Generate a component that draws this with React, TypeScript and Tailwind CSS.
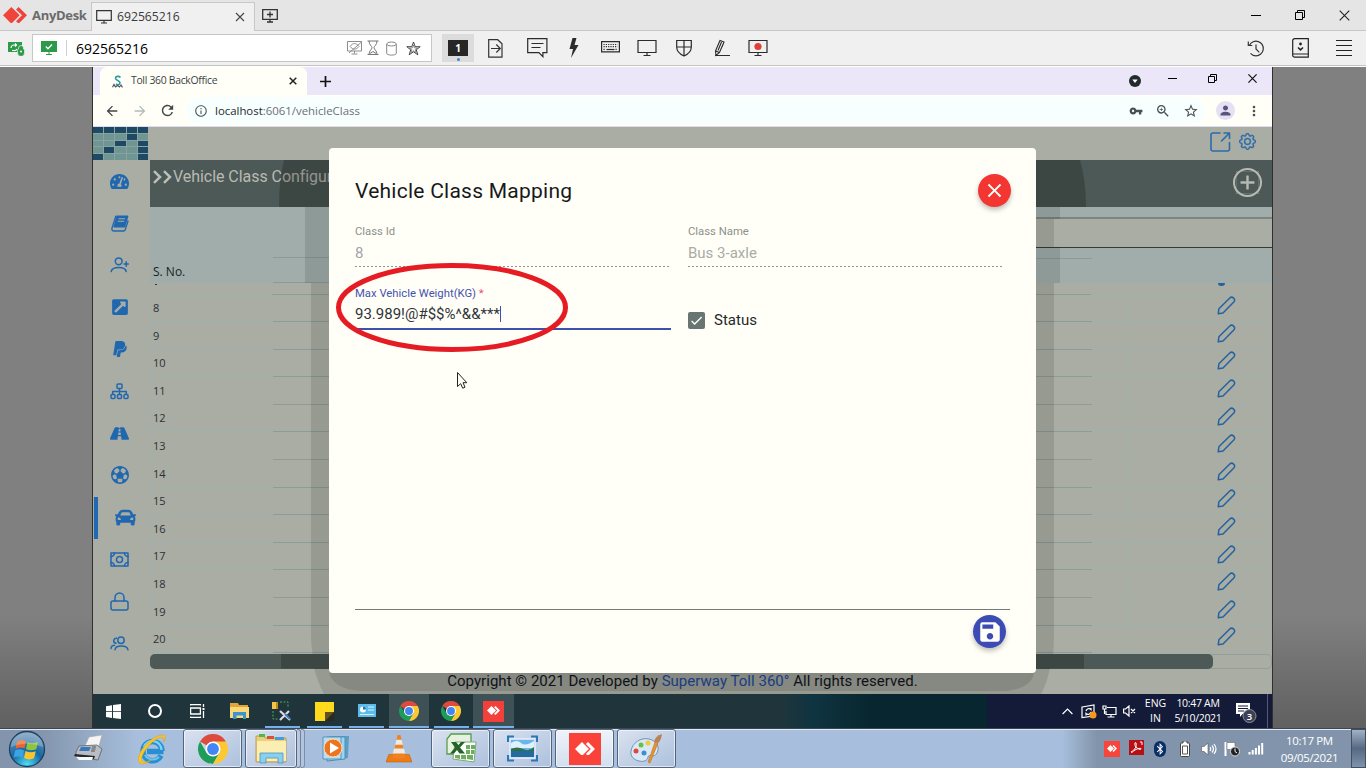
import type { ReactNode } from "react";
import {
  MdArrowBack, MdArrowForward, MdRefresh, MdInfoOutline, MdVpnKey, MdZoomIn, MdStarBorder,
  MdPerson, MdMoreVert, MdClose, MdAdd, MdSave, MdCheck,
} from "react-icons/md";
import { FaTachometerAlt, FaExternalLinkSquareAlt, FaPaypal, FaRoad, FaCar, FaBluetoothB } from "react-icons/fa";
import { IoMdFootball } from "react-icons/io";
import { BsGear } from "react-icons/bs";

const Slot = ({ className = "", children }: { className?: string; children?: ReactNode }) => (
  <div className={`flex h-full shrink-0 items-center justify-center ${className}`}>{children}</div>
);

/* ---------- AnyDesk ---------- */

const AnyDeskMark = ({ size, color }: { size: number; color: string }) => (
  <svg width={size} height={(size * 16) / 23} viewBox="0 0 23 16" fill={color}>
    <path d="M8 0l8 8-8 8-8-8z" />
    <path d="M12.5 2.3L15 0l8 8-8 8-2.500-2.3L18.200 8z" />
  </svg>
);

const Monitor = ({ children, w = 20 }: { children?: ReactNode; w?: number }) => (
  <svg width={w} height="18" viewBox="0 0 20 18" fill="none" stroke="#2b2b2b" strokeWidth="1.200">
    <path d="M1 1.500h18v12H1zM10 13.500v3M6.500 16.500h7" />
    {children}
  </svg>
);

const WinMin = () => <div className="h-px w-[10px] bg-black" />;
const WinRestore = () => (
  <svg width="10" height="10" viewBox="0 0 10 10" fill="none" stroke="#000">
    <path d="M.5 2.500h7v7h-7zM2.500 2.500v-2h7v7h-2" />
  </svg>
);
const WinClose = () => (
  <svg width="11" height="11" viewBox="0 0 11 11" fill="none" stroke="#222" strokeWidth="1.100">
    <path d="M.7.700l9.600 9.600M10.300.700L.7 10.300" />
  </svg>
);

const AnyDeskTitle = () => (
  <div className="flex h-[31px] shrink-0 border-b border-[#c8c8c8] bg-[#e5e5e5]">
    <div className="flex w-[91px] items-center pl-[3px]">
      <AnyDeskMark size={24} color="#ef443b" />
      <span className="ml-[5px] pt-[2px] text-[13px] font-bold tracking-[-0.300px] text-[#6b6b6b]">AnyDesk</span>
    </div>
    <div className="mt-[2px] -mb-px flex w-[164px] items-center border border-b-0 border-[#c8c8c8] bg-[#f0f0f0] pl-[4px]">
      <svg width="16" height="14" viewBox="0 0 16 14" fill="none" stroke="#333" strokeWidth="1.200">
        <path d="M.7.700h14.600v9.600H.7zM8 10.300v2.500M5 13h6" />
      </svg>
      <span className="ml-[5px] text-[12.200px] text-[#3a3a3a]">692565216</span>
      <span className="ml-auto mr-[9px]"><svg width="10" height="10" viewBox="0 0 10 10" stroke="#444" strokeWidth="1.100"><path d="M1 1l8 8M9 1L1 9" /></svg></span>
    </div>
    <Slot className="w-[29px] pt-[2px]">
      <svg width="16" height="14" viewBox="0 0 16 14" fill="none" stroke="#333" strokeWidth="1.300">
        <path d="M.7.700h14.600v9.600H.7zM8 10.300v2.500M5 13h6M8 2.500v6M5 5.500h6" />
      </svg>
    </Slot>
    <div className="ml-auto flex">
      <Slot className="w-[44px]"><WinMin /></Slot>
      <Slot className="w-[44px]"><WinRestore /></Slot>
      <Slot className="w-[44px]"><WinClose /></Slot>
    </div>
  </div>
);

const AnyDeskToolbar = () => (
  <div className="flex h-[36px] shrink-0 items-center border-b border-white bg-[#f0f0f0]">
    <div className="flex h-[35px] w-full items-center border-b border-[#c4c4c4]">
      <Slot className="w-[32px]">
        <svg width="17" height="15" viewBox="0 0 17 15">
          <path d="M0 1h14v10H0z" fill="#2c9a48" />
          <path d="M3 7a3 3 0 013-3h2M7 2.500L8.500 4 7 5.500M9 8a3 3 0 01-3 1.500H4" stroke="#fff" fill="none" strokeWidth="1.200" />
          <path d="M3 13h6M9.500 9.500a1.500 1.500 0 011-1.500V7a2.500 2.500 0 015 0v1a1.500 1.500 0 011 1.500V12a3 3 0 01-7 0z" fill="#2c9a48" stroke="#f0f0f0" strokeWidth=".7" />
          <circle cx="13" cy="10.500" r="1" fill="#fff" />
        </svg>
      </Slot>
      <div className="flex h-[28px] w-[400px] items-center border border-[#c6c6c6] bg-white pl-[8px]">
        <svg width="16" height="14" viewBox="0 0 16 14">
          <path d="M0 0h16v11H0zM5 13h6v1H5zM7.500 11h1v2h-1z" fill="#2c9a48" />
          <path d="M4.800 5.500l2.200 2.200 4-4.200" fill="none" stroke="#fff" strokeWidth="1.300" />
        </svg>
        <div className="ml-[9px] h-[16px] w-px bg-[#d0d0d0]" />
        <span className="ml-[9px] text-[14px] text-black">692565216</span>
        <div className="ml-auto flex items-center pr-[10px]">
          <svg width="16" height="14" viewBox="0 0 16 14" fill="none" stroke="#8c8c8c">
            <path d="M.5.500h14v9.500H.5zM7.500 10v2.500M4.500 13h6M2 12L14.500 1M3 5.500c3-4 6-4 9 0-3 3.500-6 3.500-9 0" />
          </svg>
          <svg className="ml-[4px]" width="12" height="16" viewBox="0 0 12 16" fill="none" stroke="#777">
            <path d="M.5 1h11M.5 14.500h11M2 1c0 4 3 5 3 6.700S2 10.500 2 14.500M10 1c0 4-3 5-3 6.700s3 2.800 3 6.800M3 13.500l3-2 3 2" />
          </svg>
          <svg className="ml-[7px]" width="11" height="15" viewBox="0 0 11 15" fill="none" stroke="#888">
            <ellipse cx="5.500" cy="3" rx="4.800" ry="2" /><path d="M.7 3v9.300c0 2.400 9.600 2.400 9.600 0V3" />
          </svg>
          <svg className="ml-[9px]" width="15" height="15" viewBox="0 0 15 15" fill="none" stroke="#333" strokeWidth=".9">
            <path d="M7.500 1l1.700 4.700h5L10.300 8.800l1.500 5-4.300-3-4.300 3 1.500-5L.8 5.700h5z" />
            <path d="M7.500 4l1 2.900h3L9.200 8.500l.9 3-2.600-1.800-2.600 1.800.9-3L3.500 6.900h3z" strokeWidth=".5" />
          </svg>
        </div>
      </div>
      <div className="ml-[10px] flex h-[28px] w-[32px] flex-col items-center bg-[#dcdcdc] pt-[6px]">
        <div className="flex h-[16px] w-[20px] items-center justify-center bg-[#262626] text-[10px] font-bold text-white">1</div>
        <div className="mt-[2px] size-[3px] rounded-full bg-[#3b82d0]" />
      </div>
      <Slot className="w-[42px]">
        <svg width="15" height="19" viewBox="0 0 15 19" fill="none" stroke="#333" strokeWidth="1.200">
          <path d="M.7.700h9l4.300 4v13.400H.7zM3 9.500h9M8.300 5.500l4 4-4 4" />
        </svg>
      </Slot>
      <Slot className="w-[42px]">
        <svg width="21" height="20" viewBox="0 0 21 20" fill="none" stroke="#2b2b2b" strokeWidth="1.200">
          <path d="M.7.700h19.200v14h-4v4l-4-4H.7zM4.500 5.500h12M4.500 9.500h9" />
        </svg>
      </Slot>
      <Slot className="w-[32px]">
        <svg width="10" height="20" viewBox="0 0 10 20" fill="#2b2b2b"><path d="M3.500 0h4L5.500 7H9.500L2 20l2-9H.5z" /></svg>
      </Slot>
      <Slot className="w-[41px]">
        <svg className="-mt-[3px]" width="19" height="12" viewBox="0 0 19 12" fill="none" stroke="#2b2b2b" strokeWidth="1.200">
          <path d="M.6.600h17.800v10.300H.6z" />
          <path d="M2.500 3.500h14M2.500 5.700h14M2.500 8.300h2M14.500 8.300h2" strokeDasharray="1.200 1.100" /><path d="M5.500 8.500h8" />
        </svg>
      </Slot>
      <Slot className="w-[32px]"><Monitor /></Slot>
      <Slot className="w-[42px]">
        <svg width="16" height="18" viewBox="0 0 16 18" fill="none" stroke="#2b2b2b" strokeWidth="1.200">
          <path d="M.7 1.500h14.600V8c0 5-4 7.500-7.300 9-3.300-1.500-7.300-4-7.300-9zM8 1.500V17M.7 8h14.600" />
        </svg>
      </Slot>
      <Slot className="w-[34px]">
        <svg width="16" height="18" viewBox="0 0 16 18" fill="none" stroke="#2b2b2b" strokeWidth="1.100">
          <path d="M1 16.500h15M1.500 12L6 1.500l4 1.500-4.500 10.500-3.500 3zM1.500 12l4 1.500M7.500 3L4 11.500M8 8l2-5" />
        </svg>
      </Slot>
      <Slot className="w-[38px]"><Monitor><circle cx="10" cy="7.500" r="3.600" fill="#e0403a" stroke="none" /></Monitor></Slot>
      <div className="ml-auto flex h-full">
        <Slot className="w-[44px]">
          <svg width="18" height="17" viewBox="0 0 18 17" fill="none" stroke="#333" strokeWidth="1.200">
            <path d="M2.500 5.200A7.300 7.300 0 119 15.800a7.300 7.300 0 01-5.500-2.500M1.300 1.500v4h4M9 4.500V9l3.300 3.300" />
          </svg>
        </Slot>
        <Slot className="w-[44px]">
          <svg width="17" height="20" viewBox="0 0 17 20" fill="none" stroke="#222" strokeWidth="1.200">
            <path d="M.7 2.700a2 2 0 012-2h13.600v18.500H2.700a2 2 0 01-2-2zM.7 16h15.600" />
            <path d="M6 9.500l2.500 2.300L11 9.500" strokeWidth="1.600" /><circle cx="8.500" cy="6" r="1.400" fill="#222" stroke="none" />
          </svg>
        </Slot>
        <Slot className="w-[44px]">
          <div className="flex flex-col gap-[4px]">
            {[0, 1, 2, 3].map((i) => <div key={i} className="h-px w-[16px] bg-[#222]" />)}
          </div>
        </Slot>
      </div>
    </div>
  </div>
);

/* ---------- Browser ---------- */

const BrowserTabs = () => (
  <div className="flex h-[28px] shrink-0 bg-[#ece7f8] pl-[7px]">
    <div className="flex w-[207px] items-center rounded-t-[7px] bg-[#fffff8] pl-[12px]">
      <svg width="11" height="13" viewBox="0 0 11 13" fill="none">
        <path d="M8.500 2.500C7 .700 3.500 1 3.500 3.300S8 5.500 8 7.800 5.500 10 4 9" stroke="#2b9c9c" strokeWidth="1.600" />
        <path d="M.5 12.300L2 9.500l1.500 2.300 2-1.300 2 1.500 1.500-2 1.500 2.300" stroke="#556" strokeWidth="1.200" />
      </svg>
      <span className="ml-[8px] whitespace-nowrap text-[10.400px] tracking-[-0.300px] text-[#3a3f44]">Toll 360 BackOffice</span>
      <svg className="ml-auto mr-[10px]" width="8" height="8" viewBox="0 0 8 8" stroke="#222" strokeWidth="1.500"><path d="M.7.700l6.600 6.600M7.300.700L.7 7.300" /></svg>
    </div>
    <Slot className="w-[37px]">
      <svg width="11" height="11" viewBox="0 0 11 11" stroke="#111" strokeWidth="1.700"><path d="M5.500 0v11M0 5.500h11" /></svg>
    </Slot>
    <div className="ml-auto flex">
      <Slot className="w-[37px]">
        <svg width="12" height="12" viewBox="0 0 12 12"><circle cx="6" cy="6" r="6" fill="#222b2b" /><path d="M3.300 4.500h5.400L6 8z" fill="#fff" /></svg>
      </Slot>
      <Slot className="w-[39px] pb-[5px]"><div className="h-px w-[9px] bg-black" /></Slot>
      <Slot className="w-[40px] pb-[5px]">
        <svg width="9" height="9" viewBox="0 0 9 9" fill="none" stroke="#000"><path d="M.5 2.500h6v6h-6zM2.500 2.500v-2h6v6h-2" /></svg>
      </Slot>
      <Slot className="w-[40px] pb-[5px]">
        <svg width="9" height="9" viewBox="0 0 9 9" stroke="#111" strokeWidth="1.200"><path d="M.4.400l8.200 8.200M8.600.400L.4 8.600" /></svg>
      </Slot>
    </div>
  </div>
);

const AddressBar = () => (
  <div className="flex h-[32px] shrink-0 items-center border-b border-[#dcdcee] bg-[#fffff8] pl-[5px]">
    <Slot className="w-[28px]"><MdArrowBack size={16} color="#3f4648" /></Slot>
    <Slot className="w-[27px]"><MdArrowForward size={16} color="#b3bab9" /></Slot>
    <Slot className="w-[28px]"><MdRefresh size={17} color="#3f4648" /></Slot>
    <div className="ml-[5px] flex h-[27px] flex-1 items-center rounded-full bg-[#f8ffff] pl-[8px]">
      <MdInfoOutline size={14} color="#555b60" />
      <span className="ml-[7px] whitespace-nowrap pt-px text-[11.400px] text-[#6a7075]"><span className="text-[#222a2c]">localhost</span>:6061/vehicleClass</span>
      <div className="ml-auto flex h-full">
        <Slot className="w-[27px]"><MdVpnKey size={14} color="#4a5052" /></Slot>
        <Slot className="w-[28px]"><MdZoomIn size={16} color="#4a5052" /></Slot>
        <Slot className="w-[28px]"><MdStarBorder size={16} color="#4a5052" /></Slot>
      </div>
    </div>
    <Slot className="ml-[6px] w-[28px]">
      <div className="flex size-[19px] items-center justify-center rounded-full bg-[#e6e0f5]"><MdPerson size={15} color="#55567a" /></div>
    </Slot>
    <Slot className="mr-[4px] w-[29px]"><MdMoreVert size={16} color="#4a5052" /></Slot>
  </div>
);

/* ---------- Web application ---------- */

const logoDark = [
  [1, 1, 1, 1, 1],
  [0, 0, 0, 1, 0],
  [0, 0, 1, 0, 1],
  [0, 1, 0, 0, 1],
  [1, 0, 0, 0, 1],
];

const Line = ({ children, w = 20, h = 20 }: { children: ReactNode; w?: number; h?: number }) => (
  <svg width={w} height={h} viewBox={`0 0 ${w} ${h}`} fill="none" stroke="#2067b0" strokeWidth="1.500" strokeLinecap="round" strokeLinejoin="round">{children}</svg>
);

const sideIcons: ReactNode[] = [
  <FaTachometerAlt size={19} />,
  <svg width="18" height="17" viewBox="0 0 18 17">
    <path d="M5.500.500H16.300a1 1 0 011 1.300l-3.200 10.700H2.300z" fill="#2067b0" />
    <path d="M5 .800L1 13c-.5 2 .5 3 2 3h9.500c1 0 1.500-.5 1.800-1.500l2.900-9" fill="none" stroke="#2067b0" strokeWidth="1.300" />
    <path d="M7.500 3.800h6.500M6.700 6.300h6.500M3 13.800h9.500" stroke="#a9ada3" strokeWidth="1" />
  </svg>,
  <Line w={20} h={16}><circle cx="8.700" cy="4.300" r="3.400" /><path d="M1.200 14.500c1-5.300 14-5.300 15 0M16.200 4.800v4.400M14 7h4.400" /></Line>,
  <FaExternalLinkSquareAlt size={18} />,
  <FaPaypal size={18} />,
  <Line w={19} h={17}><rect x="7" y="1" width="5" height="4.500" rx="1" /><path d="M9.500 5.500v5M2.700 11V8.500h13.600V11" /><rect x="1" y="11.500" width="4" height="4" rx="1" /><rect x="7.500" y="11.500" width="4" height="4" rx="1" /><rect x="14" y="11.500" width="4" height="4" rx="1" /></Line>,
  <FaRoad size={19} />,
  <IoMdFootball size={22} />,
  <FaCar size={21} />,
  <Line w={19} h={15}><path d="M1 1h17v13H1z" /><circle cx="9.500" cy="7.500" r="3" /><path d="M1 4.500A3.500 3.500 0 004.500 1M18 4.500A3.500 3.500 0 0114.500 1M1 10.500A3.500 3.500 0 014.500 14M18 10.500a3.500 3.500 0 00-3.500 3.500" /></Line>,
  <Line w={19} h={19}><rect x="1" y="9" width="17" height="9" rx="2" /><path d="M5 9V5.500a4.500 4.500 0 019 0V9" /></Line>,
  <Line w={19} h={15}><circle cx="11" cy="4.300" r="3.200" /><path d="M5 13.800c.5-5 12-5 13 0M6.500 2.300a2.400 2.400 0 10-.5 5M1 12.500c0-2 1.500-3 3.500-3.200" /></Line>,
];

const Sidebar = () => (
  <div className="flex w-[57px] shrink-0 flex-col">
    <div className="grid h-[33px] w-[55px] grid-cols-5 grid-rows-5 gap-px bg-[#8ba3a0]">
      {logoDark.flat().map((d, i) => <div key={i} className={d ? "bg-[#1d4964]" : "bg-[#6f9693]"} />)}
    </div>
    <div className="mt-px flex flex-col text-[#2067b0]">
      {sideIcons.map((icon, i) => (
        <div key={i} className={`flex h-[42px] items-center justify-center pb-[1.500px] ${i === 8 ? "ml-px w-[56px] border-l-[4px] border-[#1f68b3] pl-[2px]" : "w-[57px] pr-[4px]"}`}>{icon}</div>
      ))}
    </div>
  </div>
);

const Pencil = () => (
  <svg width="19" height="19" viewBox="0 0 19 19" fill="none" stroke="#2563a0" strokeWidth="1.500" strokeLinejoin="round">
    <path d="M1.200 17.800l.7-5L12.800 2c2.400-2.300 6.400 1.200 4 3.900L6 17z" />
  </svg>
);

const rows = [8, 9, 10, 11, 12, 13, 14, 15, 16, 17, 18, 19, 20];

const Segments = () => (
  <div className="flex h-px bg-[#a0b0ac]">
    <div className="ml-[122px] w-[819px] bg-[#8b9c9a]" />
  </div>
);

const Table = () => (
  <div className="flex flex-col">
    <div className="flex h-[76px] bg-[#a0adab]">
      <div className="flex flex-1 flex-col">
        <div className="ml-[123px] mt-[50px] h-px bg-[#8c9a98]" />
        <div className="ml-[3px] mt-[6px] text-[12px] font-medium leading-[16px] text-[#1b1f22]">S. No.</div>
        <div className="ml-[123px] mt-[2px] h-px bg-[#8c9a98]" />
      </div>
      <div className="flex w-[336px] flex-col">
        <div className="h-[11px] border-b border-[#7b8683]" />
        <div className="h-[30px] border-b border-[#343c3a] border-t border-t-[#7b8683] bg-[#a9ada3]" />
        <div className="mt-[10px] h-px w-[156px] bg-[#8c9a98]" />
      </div>
    </div>
    <div className="flex h-[11.500px] flex-col justify-between overflow-hidden">
      <div className="flex justify-between pl-[5px] pr-[47px]">
        <span className="mt-px h-px w-[2px] bg-[#333]" />
        <span className="h-[3px] w-[7px] rounded-b bg-[#2563a0]" />
      </div>
      <Segments />
    </div>
    {rows.map((n) => (
      <div key={n} className="flex h-[27.600px] flex-col border-l border-[#a0b0ac]">
        <div className="flex flex-1 items-center">
          <div className="w-[977px] pl-[2px] pt-px text-[11px] text-[#2b3038]">{n}</div>
          <div className="flex h-full flex-1 items-center justify-center border-l border-[#a2aea8] pb-[4px] pl-[52px]"><Pencil /></div>
        </div>
        <Segments />
      </div>
    ))}
  </div>
);

const ModalShade = () => (
  <svg className="absolute inset-0" width="1179" height="567" viewBox="93 127 1179 567">
    <g fill="#000">
      <path fillOpacity=".2" d="M284 160H1080q6 20 6 47H279q0-28 5-47z" />
      <path fillOpacity=".11" d="M305 207H1060v12H305zM305 219h24v28h-24zM1036 219h18v28h-18zM305 247H1060v36H305zM326 207h3v76h-3zM1036 207h3v76h-3z" />
      <path fillOpacity=".11" d="M311 283H1054V630Q1054 645 1053 654H312.500Q311 645 311 630z" />
      <path fillOpacity=".2" d="M281 654H1084v14.500H281z" />
      <path fillOpacity=".11" d="M314 668H1050Q1047 683 1041 694H324Q318 683 314 668z" />
      <path fillOpacity=".11" d="M329 673H1034Q1032 687 1008 691H360Q334 689 329 673z" />
    </g>
  </svg>
);

const Field = ({ label, value, tone }: { label: string; value: string; tone: string }) => (
  <div className="w-[316px]">
    <div className="text-[11.300px] leading-[16px] text-[#8e908b]">{label}</div>
    <div className={`mt-[3px] h-[23px] text-[15px] leading-[20px] ${tone}`}>{value}</div>
    <div className="h-px bg-[repeating-linear-gradient(90deg,#92948e_0_2px,transparent_2px_4px)]" />
  </div>
);

const Modal = () => (
  <div className="absolute left-[236px] top-[21px] flex h-[525px] w-[707px] flex-col rounded-[4px] bg-[#fffff8] px-[26px] font-['Roboto',sans-serif]">
    <div className="mt-[26px] flex h-[33px] items-center justify-between">
      <h1 className="pt-[3px] text-[21px] tracking-[0.250px] text-[#17191c]">Vehicle Class Mapping</h1>
      <button className="-mr-[1px] flex size-[33px] items-center justify-center rounded-full bg-[#f33632] shadow-[0_3px_5px_rgba(0,0,0,0.250)]">
        <MdClose size={23} color="#fffff8" />
      </button>
    </div>
    <div className="mt-[17px] flex gap-[17px]">
      <Field label="Class Id" value="8" tone="text-[#a3a5a9]" />
      <Field label="Class Name" value="Bus 3-axle" tone="text-[#a9aba5]" />
    </div>
    <div className="mt-[19px] flex gap-[17px]">
      <div className="w-[316px] border-b-[2px] border-[#3f4fae]">
        <div className="text-[11.300px] leading-[15px] text-[#4652ae]">Max Vehicle Weight(KG) <span className="text-[#ee4a7a]">*</span></div>
        <div className="mt-[3px] flex h-[24px] items-start text-[15px] leading-[21px] text-[#30343a]">
          <span>93.989!@#$$%^&amp;&amp;***</span><span className="mt-[2px] h-[16px] w-px bg-[#3f4fae]" />
        </div>
      </div>
      <div className="flex items-center pt-[24px]">
        <div className="flex size-[17px] items-center justify-center rounded-[2px] bg-[#687573]"><MdCheck size={15} color="#fffff8" /></div>
        <span className="ml-[9px] text-[15px] leading-[20px] text-[#25282a]">Status</span>
      </div>
    </div>
    <div className="mt-auto h-px bg-[#757a78]" />
    <div className="mb-[25px] mt-[5px] flex justify-end pr-[4px]">
      <button className="flex size-[33px] items-center justify-center rounded-full bg-[#3c4cb4] shadow-[0_3px_5px_rgba(0,0,0,0.250)]">
        <MdSave size={26} color="#fffff8" />
      </button>
    </div>
  </div>
);

const WebApp = () => (
  <div className="relative flex h-[567px] shrink-0 bg-[#a9ada3]">
    <Sidebar />
    <div className="flex min-w-0 flex-1 flex-col">
      <div className="flex h-[33px] shrink-0 items-center justify-end gap-[8px] pb-[4px] pr-[16px]">
        <svg width="21" height="20" viewBox="0 0 21 20" fill="none" stroke="#2b6cab" strokeWidth="1.600" strokeLinecap="round" strokeLinejoin="round">
          <path d="M10 1H3a2 2 0 00-2 2v14a2 2 0 002 2h14.500a2 2 0 002-2v-6.500M11.500 9L19.500 1M14 1h5.500v5.500" />
        </svg>
        <BsGear size={17} color="#2b6cab" strokeWidth={0.4} />
      </div>
      <div className="flex h-[47px] shrink-0 bg-[#4c5956] font-['Roboto',sans-serif]">
        <div className="flex h-[33px] items-center pl-[3px]">
          <svg width="20" height="14" viewBox="0 0 20 14" fill="none" stroke="#bcc0b8" strokeWidth="2.500"><path d="M1 1.200L7 7l-6 5.800M11 1.200L17 7l-6 5.800" /></svg>
          <span className="text-[16px] tracking-[-0.050px] text-[#bbb9b3]">Vehicle Class Configuration</span>
        </div>
        <div className="ml-auto mr-[10px] mt-[8px] flex size-[29px] items-center justify-center rounded-full border-[2px] border-[#b9bab2]"><MdAdd size={23} color="#b9bab2" stroke="#b9bab2" strokeWidth={0.5} /></div>
      </div>
      <Table />
      <div className="mt-[0.700px] h-[15px] shrink-0 rounded-[5px] border border-[#989d95]">
        <div className="-ml-px -mt-px h-[15px] w-[1063px] rounded-[5px] bg-[#4c5956]" />
      </div>
      <div className="flex h-[24px] items-center justify-center whitespace-nowrap pr-[57px] font-['Roboto',sans-serif] text-[15px] tracking-[0.030px] text-[#15171f]">
        <span>Copyright © 2021 Developed by <span className="text-[#254ea6]">Superway Toll 360°</span> All rights reserved.</span>
      </div>
    </div>
    <ModalShade />
    <Modal />
    <svg className="absolute left-[240px] top-[133px]" width="240" height="140" viewBox="333 260 240 140">
      <ellipse cx="452" cy="307.500" rx="113.500" ry="42" fill="none" stroke="#e61c24" strokeWidth="5" />
      <path d="M457.500 372.500v14l3.200-2.800 2 4.500 2.300-1-2-4.500h3.800z" fill="#fffff8" stroke="#222" strokeWidth="1" />
    </svg>
  </div>
);

/* ---------- Remote taskbar ---------- */

const ChromeLogo = ({ size }: { size: number }) => (
  <svg width={size} height={size} viewBox="0 0 32 32">
    <path d="M16 16L2.140 8A16 16 0 0129.860 8z" fill="#dd4b3e" />
    <path d="M2.140 8l6.930 12L16 24l-4 7.500A16 16 0 012.140 8z" fill="#1e9d58" />
    <path d="M9.070 20L16 16l6.930 4L16 32A16 16 0 0112 31z" fill="#1e9d58" />
    <path d="M22.930 20L16 32A16 16 0 0029.860 8H16z" fill="#fcc934" />
    <circle cx="16" cy="16" r="8" fill="#fff" /><circle cx="16" cy="16" r="6.300" fill="#4285f4" />
  </svg>
);

const RemoteSlot = ({ open = false, lit = false, children }: { open?: boolean; lit?: boolean; children: ReactNode }) => (
  <div className="flex h-full w-[42.300px] shrink-0 px-[1px]">
    <div className={`flex flex-1 flex-col items-center ${lit ? "bg-[#3e5156]" : ""}`}>
      <div className="flex flex-1 items-center justify-center pt-[2px]">{children}</div>
      <div className={`h-[2px] ${lit ? "w-full" : "w-[35px]"} ${open ? "bg-[#76b1ec]" : ""}`} />
    </div>
  </div>
);

const RemoteTaskbar = () => (
  <div className="flex h-[34px] shrink-0 bg-linear-to-r from-[#20353b] from-58% via-[#0f3441] via-61% to-[#08262f] to-66% text-white">
    <Slot className="w-[41px]">
      <svg width="15" height="15" viewBox="0 0 15 15" fill="#fff"><path d="M0 2.200l6-.9v5.900H0zM7 1.100L15 0v7.200H7zM0 8.100h6V14l-6-.900zM7 8.100h8V15l-8-1.100z" /></svg>
    </Slot>
    <RemoteSlot><div className="size-[14px] rounded-full border-[2px] border-white" /></RemoteSlot>
    <RemoteSlot>
      <svg width="15" height="14" viewBox="0 0 15 14" fill="none" stroke="#fff" strokeWidth="1.300"><path d="M.6 1.500V.6h9.800v.9M.6 12.500v.9h9.800v-.9M.6 4h9.800v6H.6zM13.500 0v3M13.500 7v7" /><path d="M12.500 4h2v2h-2z" fill="#fff" stroke="none" /></svg>
    </RemoteSlot>
    <RemoteSlot>
      <svg width="19" height="16" viewBox="0 0 19 16"><path d="M0 0h8l1 2h9v13H0z" fill="#e0a63a" /><path d="M0 4h19v11H0z" fill="#fbd978" /><path d="M3 16V9h13v7h-3v-3.500H6.500V16z" fill="#3e92cd" /></svg>
    </RemoteSlot>
    <RemoteSlot open>
      <svg width="20" height="21" viewBox="0 0 20 21"><path d="M0 1h6v7H0z" fill="#f0c548" /><path d="M4 1h2v7H4z" fill="#c08a20" /><path d="M8 1h8v6M1 10v8h5" fill="none" stroke="#4caf50" strokeDasharray="2 1.500" /><path d="M8 10l10 9M17 10l-9 9" stroke="#d8dfe6" strokeWidth="2.200" /><path d="M13 13l5 5" stroke="#4a7ab5" strokeWidth="2" /></svg>
    </RemoteSlot>
    <RemoteSlot open>
      <svg width="19" height="19" viewBox="0 0 19 19"><path d="M0 0h19v19H0z" fill="#ffd91c" /><path d="M10 19v-9h9v9z" fill="#2c2a20" /><path d="M10 19v-9h9z" fill="#5f5324" /></svg>
    </RemoteSlot>
    <RemoteSlot open>
      <svg width="18" height="14" viewBox="0 0 18 14"><path d="M0 0h18v13H0z" fill="#5bbcec" /><circle cx="5" cy="5.500" r="3" fill="#fff" /><path d="M5 5.500V2.500a3 3 0 013 3z" fill="#2a6fb0" /><path d="M10 3h6M10 6h6M2 10.500h14" stroke="#d9f1ff" strokeWidth="1.200" /></svg>
    </RemoteSlot>
    <RemoteSlot open lit><ChromeLogo size={20} /></RemoteSlot>
    <RemoteSlot open><ChromeLogo size={20} /></RemoteSlot>
    <RemoteSlot open lit>
      <div className="flex size-[21px] items-center justify-center bg-[#f4403a]"><AnyDeskMark size={13} color="#fff" /></div>
    </RemoteSlot>
    <div className="ml-auto flex w-[285px] bg-[#131b38] pl-[70px] text-[10.500px] leading-[15px]">
      <Slot className="w-[21px]"><svg width="11" height="7" viewBox="0 0 11 7" fill="none" stroke="#fff" strokeWidth="1.200"><path d="M.6 6L5.500 1l4.900 5" /></svg></Slot>
      <Slot className="w-[21px]"><svg width="16" height="15" viewBox="0 0 16 15" fill="none" stroke="#fff" strokeWidth="1.200"><path d="M1 3l12-2v11L1 13.500zM5 7a3 3 0 015-1.500V4M10 8a3 3 0 01-5 1.500v2" /><circle cx="12" cy="11" r="3.500" fill="#f39a1f" stroke="none" /></svg></Slot>
      <Slot className="w-[20px]"><svg width="15" height="13" viewBox="0 0 15 13" fill="none" stroke="#fff" strokeWidth="1.200"><path d="M5 2.500h9v7H4V6M9 9.500V12M5.500 12h7M1 1h3v3H1zM2.500 4v5" /></svg></Slot>
      <Slot className="w-[20px]"><svg width="13" height="12" viewBox="0 0 13 12" fill="none" stroke="#fff" strokeWidth="1.200"><path d="M.6 4h2L6 1v10L2.600 8h-2zM8 4l4 4M12 4L8 8" /></svg></Slot>
      <Slot className="w-[33px] text-center"><div>ENG<br />IN</div></Slot>
      <Slot className="w-[52px] text-center tracking-[-0.300px]"><div className="whitespace-nowrap">10:47 AM<br />5/10/2021</div></Slot>
      <Slot className="w-[43px] pt-[3px]">
        <svg width="22" height="22" viewBox="0 0 22 22"><path d="M1 1h14v11H7.500L5 15v-3H1z" fill="#fff" /><path d="M3 4h10M3 6.500h10M3 9h6" stroke="#131b38" /><circle cx="14.500" cy="14" r="6.500" fill="#3d4055" stroke="#8a8c9a" /><text x="14.500" y="17.500" fontSize="9.500" fontWeight="600" fill="#fff" textAnchor="middle">3</text></svg>
      </Slot>
      <div className="ml-auto h-full w-[5px] border-l border-[#535a72]" />
    </div>
  </div>
);

/* ---------- Host taskbar ---------- */

const TaskButton = ({ active = false, className = "w-[59px]", children }: { active?: boolean; className?: string; children: ReactNode }) => (
  <div className={`flex h-[39px] shrink-0 items-center justify-center rounded-[3px] border border-[#53657c] shadow-[inset_0_0_0_1px_rgba(255,255,255,0.600)] ${active ? "bg-linear-to-b from-[#eef3fa] to-[#d3dfef]" : "bg-linear-to-br from-[#d9e2f0] to-[#adc0dc]"} ${className}`}>{children}</div>
);

const HostTaskbar = () => (
  <div className="flex h-[40px] shrink-0 items-center border-t border-[#3d4753] bg-linear-to-r from-[#8395ad] from-3% via-[#a7bfdc] via-10% to-[#a7bfdc] shadow-[inset_0_1px_0_#dfe8f3]">
    <Slot className="w-[54px]">
      <svg width="38" height="38" viewBox="0 0 38 38">
        <defs><radialGradient id="orb" cx=".5" cy=".95" r=".9"><stop offset="0" stopColor="#4fe0f5" /><stop offset=".5" stopColor="#1568a5" /><stop offset="1" stopColor="#6d93b5" /></radialGradient></defs>
        <circle cx="19" cy="19" r="17.500" fill="url(#orb)" stroke="#20405f" strokeWidth="1.300" />
        <path d="M9 11.500q5-2.500 9 0l-1.500 7q-4.500-2-9 .3z" fill="#f0642a" /><path d="M19.500 12q5 2.500 10.500-.3l-1.700 7.500q-5.300 2.300-10.300-.2z" fill="#8cc63e" />
        <path d="M7 20.500q4.500-2.300 9 0l-1.500 7q-4.500-2-9 .2z" fill="#3fa2e6" /><path d="M17.500 21q5 2.500 10.300.2L26 28.300q-5 2.300-10-.3z" fill="#fbc42d" />
        <path d="M3 17a16 14.500 0 0132 0q-16-7-32 0z" fill="#fff" fillOpacity=".25" />
      </svg>
    </Slot>
    <Slot className="w-[68px]">
      <svg width="29" height="27" viewBox="0 0 29 27"><path d="M15 2L28 0l-3 11H11z" fill="#f5f5f5" stroke="#aaa" strokeWidth=".6" /><path d="M5 11l18-1 5 4-4 11-22-3 0-5z" fill="#b9bec5" stroke="#5c6068" strokeWidth=".8" /><path d="M7 12h10l-2 4H5z" fill="#3b78b8" /><path d="M1 19l20 2-1 3-20-3z" fill="#26282c" /><path d="M2 22h17l-1 3H5z" fill="#f8f8f8" /><path d="M18 12h4M17.500 14h4M17 16h4" stroke="#555" /></svg>
    </Slot>
    <Slot className="w-[61px] pr-[2px]">
      <svg width="30" height="32" viewBox="0 0 30 32" fill="none">
        <path d="M26.500 18.500H10M25 18A9.500 9.500 0 106 18a9.500 9.500 0 0018 4.500" stroke="#2790d3" strokeWidth="5.500" />
        <path d="M24.500 17A9 9 0 007 14" stroke="#82d2f5" strokeWidth="2.200" />
        <path d="M8 22a9 9 0 0014 2" stroke="#6cc4ef" strokeWidth="2" />
        <path d="M2 29C-2 21 15 1 27 2c2 1 1 4 0 7 0-3 0-4-1.500-5C17 4 2 22 5 28c2 2 6 1 9-1-5 4-10 5-12 2z" fill="#f6c72e" stroke="#e0a717" strokeWidth=".7" />
      </svg>
    </Slot>
    <TaskButton><ChromeLogo size={30} /></TaskButton>
    <div className="ml-[3px] flex">
      <TaskButton className="w-[52px]">
        <svg width="33" height="31" viewBox="0 0 33 31"><path d="M1 3h8l1 2h21v24H1z" fill="#e9cf7c" stroke="#b6933a" strokeWidth=".8" /><path d="M4 1h6v3H4z" fill="#51b848" /><path d="M12 3h7v3h-7z" fill="#d8513e" /><path d="M20 4h9v3h-9z" fill="#4a9ad5" /><path d="M2 8h29v20H2z" fill="#fbeeb2" /><path d="M5 30V20h23v10h-5v-5H11v5z" fill="#8bcfee" stroke="#4795c2" strokeWidth=".8" /></svg>
      </TaskButton>
      <div className="h-[39px] w-[4px] rounded-r-[3px] border border-l-0 border-[#6f8099] bg-[#b9c8de]" />
      <div className="h-[39px] w-[4px] rounded-r-[3px] border border-l-0 border-[#7e90a8] bg-[#b3c5de]" />
    </div>
    <Slot className="w-[62px]">
      <svg width="29" height="27" viewBox="0 0 29 27"><path d="M8 1h19l-1 22-18 2z" fill="#5a9fc8" /><path d="M5 2h18v22l-18 2z" fill="#a3d3ec" stroke="#4d8db5" /><path d="M1 2h18v22H1z" fill="#b9def0" stroke="#5794bb" /><circle cx="11" cy="13" r="9" fill="#ee7420" stroke="#fcdab8" /><path d="M8 7.500v11l9-5.500z" fill="#fff" /></svg>
    </Slot>
    <Slot className="w-[64px]">
      <svg width="26" height="31" viewBox="0 0 28 31"><path d="M3 22h22l3 8H0z" fill="#ef7c13" stroke="#c25a05" strokeWidth=".6" /><path d="M12.500 1h3L21 25q-7 3-14 0z" fill="#f18222" /><path d="M11.200 6h5.600l1.400 5.500H9.800zM8.700 15.500h10.600l1.400 5.500H7.300z" fill="#eeeae6" /></svg>
    </Slot>
    <div className="flex gap-[3px]">
      <TaskButton>
        <svg width="32" height="31" viewBox="0 0 32 31"><path d="M6 1h20v20H2V6z" fill="#e5f2df" stroke="#5a9b4c" strokeWidth="1.300" /><path d="M10 9h21l-2 20-21-3z" fill="#fff" stroke="#7fa878" /><path d="M21 12h4v4h-4zM26 12h4v4h-4zM21 17h4v4h-4zM26 17h3.500v4H26zM10 22h5v4l-5-1zM16 22h5v4.500l-5-.500zM22 22h6v5l-6-1z" fill="#6bae5b" /><path d="M6 9h5l2.500 3L16 9h4l-5 5.500 5 6h-5.500L12 17l-3 3.500H5l5-6z" fill="#25632a" /></svg>
      </TaskButton>
      <TaskButton>
        <svg width="31" height="27" viewBox="0 0 31 27"><path d="M3 4h25v19H3z" fill="#68b7ea" stroke="#eef" strokeWidth="1.500" /><path d="M4 8q6-4 10 0t13-2v7H4z" fill="#dff1fb" /><path d="M4 14q6-3 12 0t11-2v4H4z" fill="#2f7048" /><path d="M4 16h23v6H4z" fill="#256a9d" /><path d="M1 7V1.500h6M24 1.500h6V7M30 20v5.500h-6M7 25.500H1V20" fill="none" stroke="#2c77b8" strokeWidth="2.200" /></svg>
      </TaskButton>
      <TaskButton active><div className="flex size-[32px] items-center justify-center bg-[#fb4238]"><AnyDeskMark size={20} color="#fff" /></div></TaskButton>
      <TaskButton>
        <svg width="33" height="31" viewBox="0 0 33 31"><path d="M1 18C2 10 11 4 19 6s11 8 8 14-8 0-9 4-4 5-9 4-9-5-8-10z" fill="#d9e8f4" stroke="#6c95ba" /><circle cx="6" cy="18" r="2.500" fill="#e0483c" /><circle cx="11" cy="12" r="2.500" fill="#6abf47" /><circle cx="18" cy="10" r="2.500" fill="#f3ca3a" /><circle cx="14" cy="20" r="2.500" fill="#3f8fd0" /><path d="M25 9l3 1-8 20-2-1z" fill="#e8932d" stroke="#b56a14" strokeWidth=".5" /><path d="M24 9q1-6 8-8-1 7-4 9z" fill="#b98357" /></svg>
      </TaskButton>
    </div>
    <div className="flex h-full flex-1 bg-linear-to-r from-[#a7bfdc] from-56% to-[#8294ab] to-61% shadow-[inset_0_1px_0_#dfe8f3]">
      <div className="ml-auto flex">
        <Slot className="w-[24px]"><div className="flex size-[16px] items-center justify-center bg-[#f8443a]"><AnyDeskMark size={10} color="#fff" /></div></Slot>
        <Slot className="w-[24px]"><svg className="-mt-[2px]" width="15" height="15" viewBox="0 0 15 15"><path d="M0 0h15v15H0z" fill="#b80f14" /><path d="M2 12c4-2 6-6 5-9-1-2-2 2 0 4s4 3 5 2-3-1-6 1-3 3-4 2zM11 2h2v3" fill="none" stroke="#fff" /></svg></Slot>
        <Slot className="w-[24px]"><div className="flex h-[16px] w-[12px] items-center justify-center rounded-full bg-[#0a2f66]"><FaBluetoothB size={12} color="#fff" /></div></Slot>
        <Slot className="w-[25px]"><svg width="10" height="16" viewBox="0 0 10 16"><path d="M3 0h4v2h1.500a1 1 0 011 1v11.500a1 1 0 01-1 1h-7a1 1 0 01-1-1V3a1 1 0 011-1H3z" fill="#fff" stroke="#444" /><path d="M2.500 5h5v8h-5z" fill="none" stroke="#555" /></svg></Slot>
        <Slot className="w-[23px]"><svg width="16" height="14" viewBox="0 0 16 14" fill="none" stroke="#fff" strokeWidth="1.200"><path d="M.6 4.500h2.500L7 1v12L3.100 9.500H.6z" fill="#fff" stroke="#555" strokeWidth=".6" /><path d="M9 5q1.500 2 0 4M11 3.500q3 3.500 0 7M13 2q4 5 0 10" /></svg></Slot>
        <Slot className="w-[24px]"><svg width="16" height="16" viewBox="0 0 16 16"><path d="M1.500 1v14" stroke="#fff" strokeWidth="2" /><path d="M3 1.500h8v7H3z" fill="#fff" stroke="#555" strokeWidth=".5" /><circle cx="11" cy="10.500" r="4.500" fill="#222" stroke="#ddd" /><path d="M11 7.500v3l2 1.500" stroke="#fff" fill="none" /></svg></Slot>
        <Slot className="w-[24px]"><svg width="16" height="13" viewBox="0 0 16 13" fill="#fff"><path d="M.5 10h2v2.500h-2zM3.700 8h2v4.500h-2zM6.900 6h2v6.500h-2zM10 3.500h2v9h-2zM13.200 1h2v11.500h-2z" /></svg></Slot>
        <Slot className="w-[83px] text-center text-[11.500px] leading-[17px] tracking-[-0.350px] text-white"><div className="whitespace-nowrap">10:17 PM<br />09/05/2021</div></Slot>
        <div className="h-full w-[15px] border border-[#414f60] bg-linear-to-b from-[#a3b2c5] via-[#566983] to-[#7f93ad]" />
      </div>
    </div>
  </div>
);

export default function App() {
  return (
    <div className="flex h-[768px] w-[1366px] flex-col overflow-hidden font-['Open_Sans',sans-serif]">
      <AnyDeskTitle />
      <AnyDeskToolbar />
      <div className="flex h-[661px] shrink-0 bg-linear-to-b from-[#808080] from-83% to-[#606060] pl-[92px]">
        <div className="flex w-[1181px] flex-col border-x border-[#303030]">
          <BrowserTabs />
          <AddressBar />
          <WebApp />
          <RemoteTaskbar />
        </div>
      </div>
      <HostTaskbar />
    </div>
  );
}
